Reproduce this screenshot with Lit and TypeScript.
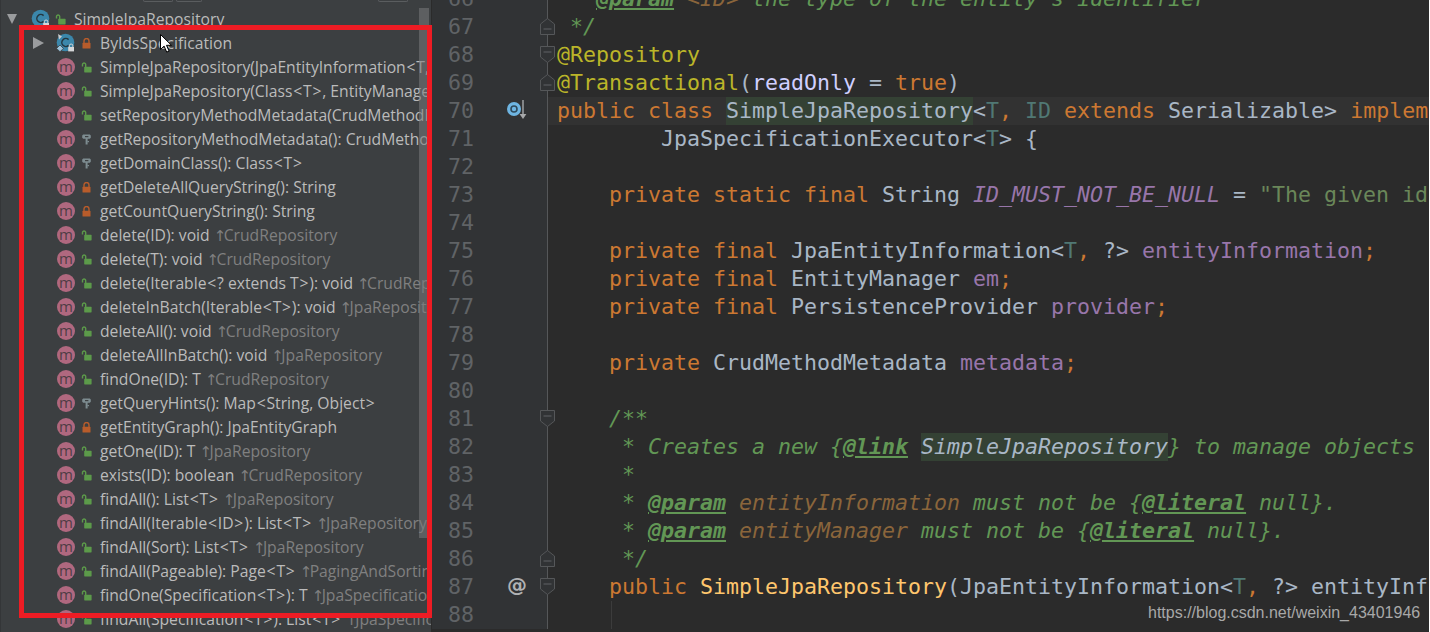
import { LitElement, html, css, svg } from "lit";
import { customElement } from "lit/decorators.js";

type Vis = "pub" | "pri" | "pro";
type Row = { n: string; s?: string; v: Vis };
type Tok = [string, string];
type Line = { no: number; toks: Tok[]; cur?: boolean; fold?: "up" | "down"; mark?: "impl" | "at"; guide?: boolean };

const rows: Row[] = [
  { n: "SimpleJpaRepository(JpaEntityInformation<T, ?>, EntityManager)", v: "pub" },
  { n: "SimpleJpaRepository(Class<T>, EntityManager)", v: "pub" },
  { n: "setRepositoryMethodMetadata(CrudMethodMetadata): void", v: "pub" },
  { n: "getRepositoryMethodMetadata(): CrudMethodMetadata", v: "pro" },
  { n: "getDomainClass(): Class<T>", v: "pro" },
  { n: "getDeleteAllQueryString(): String", v: "pri" },
  { n: "getCountQueryString(): String", v: "pri" },
  { n: "delete(ID): void ", s: "CrudRepository", v: "pub" },
  { n: "delete(T): void ", s: "CrudRepository", v: "pub" },
  { n: "delete(Iterable<? extends T>): void ", s: "CrudRepository", v: "pub" },
  { n: "deleteInBatch(Iterable<T>): void ", s: "JpaRepository", v: "pub" },
  { n: "deleteAll(): void ", s: "CrudRepository", v: "pub" },
  { n: "deleteAllInBatch(): void ", s: "JpaRepository", v: "pub" },
  { n: "findOne(ID): T ", s: "CrudRepository", v: "pub" },
  { n: "getQueryHints(): Map<String, Object>", v: "pro" },
  { n: "getEntityGraph(): JpaEntityGraph", v: "pri" },
  { n: "getOne(ID): T ", s: "JpaRepository", v: "pub" },
  { n: "exists(ID): boolean ", s: "CrudRepository", v: "pub" },
  { n: "findAll(): List<T> ", s: "JpaRepository", v: "pub" },
  { n: "findAll(Iterable<ID>): List<T> ", s: "JpaRepository", v: "pub" },
  { n: "findAll(Sort): List<T> ", s: "JpaRepository", v: "pub" },
  { n: "findAll(Pageable): Page<T> ", s: "PagingAndSortingRepository", v: "pub" },
  { n: "findOne(Specification<T>): T ", s: "JpaSpecificationExecutor", v: "pub" },
  { n: "findAll(Specification<T>): List<T> ", s: "JpaSpecificationExecutor", v: "pub" },
];

const lines: Line[] = [
  { no: 66, toks: [["doc", " * "], ["tag", "@param"], ["doc", " "], ["par", "<ID>"], ["doc", " the type of the entity's identifier"]] },
  { no: 67, toks: [["doc", " */"]], fold: "up" },
  { no: 68, toks: [["ann", "@Repository"]], fold: "down" },
  { no: 69, toks: [["ann", "@Transactional"], ["pl", "("], ["attr", "readOnly"], ["pl", " = "], ["kw", "true"], ["pl", ")"]], fold: "up" },
  { no: 70, cur: true, mark: "impl", toks: [["kw", "public class "], ["pl hl", "SimpleJpaRepository"], ["pl", "<"], ["tp", "T"], ["kw", ", "], ["tp", "ID"], ["kw", " extends "], ["pl", "Serializable> "], ["kw", "implements "], ["pl", "JpaRepository<T, ID>,"]] },
  { no: 71, toks: [["pl", "        JpaSpecificationExecutor<"], ["tp", "T"], ["pl", "> {"]] },
  { no: 72, toks: [] },
  { no: 73, toks: [["kw", "    private static final "], ["pl", "String "], ["cst", "ID_MUST_NOT_BE_NULL"], ["pl", " = "], ["str", "\"The given id must not be null!\""], ["kw", ";"]] },
  { no: 74, toks: [] },
  { no: 75, toks: [["kw", "    private final "], ["pl", "JpaEntityInformation<"], ["tp", "T"], ["kw", ", "], ["pl", "?> "], ["fld", "entityInformation"], ["kw", ";"]] },
  { no: 76, toks: [["kw", "    private final "], ["pl", "EntityManager "], ["fld", "em"], ["kw", ";"]] },
  { no: 77, toks: [["kw", "    private final "], ["pl", "PersistenceProvider "], ["fld", "provider"], ["kw", ";"]] },
  { no: 78, toks: [] },
  { no: 79, toks: [["kw", "    private "], ["pl", "CrudMethodMetadata "], ["fld", "metadata"], ["kw", ";"]] },
  { no: 80, toks: [] },
  { no: 81, toks: [["doc", "    /**"]], fold: "down" },
  { no: 82, toks: [["doc", "     * Creates a new {"], ["tag", "@link"], ["doc", " "], ["docref hl", "SimpleJpaRepository"], ["doc", "} to manage objects"]] },
  { no: 83, toks: [["doc", "     *"]] },
  { no: 84, toks: [["doc", "     * "], ["tag", "@param"], ["doc", " "], ["par", "entityInformation"], ["doc", " must not be {"], ["tag", "@literal"], ["doc", " null}."]] },
  { no: 85, toks: [["doc", "     * "], ["tag", "@param"], ["doc", " "], ["par", "entityManager"], ["doc", " must not be {"], ["tag", "@literal"], ["doc", " null}."]] },
  { no: 86, toks: [["doc", "     */"]], fold: "up" },
  { no: 87, mark: "at", fold: "down", toks: [["kw", "    public "], ["fn", "SimpleJpaRepository"], ["pl", "(JpaEntityInformation<"], ["tp", "T"], ["kw", ", "], ["pl", "?> entityInformation,"]] },
  { no: 88, guide: true, toks: [] },
];

const openLock = svg`<svg class="vis" viewBox="0 0 11 11" width="11" height="11"><path d="M1.5 4.5V2.6a1.6 1.6 0 0 1 3.2 0V5" fill="none" stroke="#5c9a4a" stroke-width="1.4"/><rect x="3.2" y="4.8" width="7.4" height="5.6" rx=".6" fill="#5c9a4a"/></svg>`;
const closedLock = svg`<svg class="vis" viewBox="0 0 11 11" width="11" height="11"><path d="M3 5V3a2.5 2.5 0 0 1 5 0v2" fill="none" stroke="#b85c2b" stroke-width="1.4"/><rect x="1.5" y="4.8" width="8" height="5.7" rx=".6" fill="#b85c2b"/></svg>`;
const keyIcon = svg`<svg class="vis" viewBox="0 0 11 11" width="11" height="11"><path d="M2.2 .6h6.6l1 1v2.2l-1 1H6.6v5.6H4.6V4.8H2.2l-1-1V1.6z" fill="#7d8c90"/><rect x="4" y="2" width="3.4" height="1.2" fill="#3c3f41"/><rect x="6.4" y="7" width="1.6" height="1.2" fill="#7d8c90"/></svg>`;

const visIcon = (v: Vis) => (v === "pub" ? openLock : v === "pri" ? closedLock : keyIcon);

const classIcon = (extra: boolean) => svg`<svg class="cls" viewBox="0 0 20 20" width="20" height="20">
  <circle cx="9.5" cy="9.5" r="8.8" fill="#3b87ab"/>
  <path d="M12.6 6.6a4 4 0 1 0 0 5.8" fill="none" stroke="#24363f" stroke-width="1.5"/>
  ${extra ? svg`<path d="M2 1l4 2.4-3 3z" fill="#c9ccce"/><path d="M4 12l3.4 3.4L4 18.8.6 15.4z" fill="#9fc5dc" stroke="#3c3f41" stroke-width=".8"/>` : ""}
  <path d="M13.3 14v-1.2a1.8 1.8 0 0 1 3.6 0V14" fill="none" stroke="#d5d7d8" stroke-width="1"/>
  <rect x="12.2" y="14" width="5.8" height="4.4" fill="#d5d7d8"/>
</svg>`;

const foldMark = (k: "up" | "down") =>
  k === "up"
    ? svg`<svg class="fold" viewBox="0 0 15 17" width="15" height="17"><path d="M7.5 .5l7 5.5v10.5H.5V6z" fill="#313335" stroke="#555759"/><path d="M3.5 11h8" stroke="#606366"/></svg>`
    : svg`<svg class="fold" viewBox="0 0 15 17" width="15" height="17"><path d="M.5 .5h14V11l-7 5.5-7-5.5z" fill="#313335" stroke="#555759"/><path d="M3.5 6h8" stroke="#606366"/></svg>`;

const implMark = svg`<svg class="impl" viewBox="0 0 22 22" width="22" height="22"><circle cx="8" cy="10" r="7" fill="#6eb5e2"/><circle cx="8" cy="10" r="3" fill="none" stroke="#2f4a5c" stroke-width="1.6"/><path d="M17 1v16" stroke="#a7a9ab" stroke-width="1.4"/><path d="M13.6 15h6.8L17 20z" fill="#a7a9ab"/></svg>`;

/* The reference's UI font sets angle brackets wider than Open Sans does. */
const label = (s: string) =>
  s.split(/([<>])/).map((p) => (p === "<" || p === ">" ? html`<span class="ang">${p}</span>` : p));

@customElement("app-root")
export class AppRoot extends LitElement {
  static styles = css`
    :host { display: block; width: 1430px; height: 632px; overflow: hidden; position: relative; background: #fff; }
    .ide { display: flex; height: 632px; width: 1429px; overflow: hidden; }
    .panel { position: relative; flex: 0 0 431px; height: 632px; overflow: hidden; background: #3c3f41; border-right: 1px solid #2b2b2b; box-shadow: inset 1px 0 0 #343638;
      font: 15.7px/24px "Open Sans", "Noto Sans", sans-serif; color: #bbbbbb; }
    .tools { display: flex; height: 7px; padding-left: 143px; gap: 3px; }
    .tool { height: 1px; border: 1px solid #5a5d5f; border-top: 0; border-radius: 0 0 3px 3px; width: 28px; }
    .tool.b { width: 24px; }
    .tool.c { width: 28px; margin-left: 173px; }
    .row { display: flex; align-items: center; height: 24px; white-space: pre; }
    .row.root { padding-left: 7px; }
    .row.child { padding-left: 33px; }
    .row.m { padding-left: 57px; }
    .arrow { width: 0; height: 0; flex: none; }
    .arrow.down { margin-right: 14px; border: 5.5px solid transparent; border-top: 10px solid #9a9c9e; border-bottom: 0; }
    .arrow.right { margin-right: 12px; border: 6px solid transparent; border-left: 11px solid #9a9c9e; border-right: 0; }
    .cls { flex: none; margin-right: 4px; }
    .child .cls { margin-right: 5px; }
    .vis { flex: none; }
    .lbl { margin-left: 8px; }
    .ang { padding: 0 0.8px; }
    .mi { flex: none; width: 18px; height: 18px; border-radius: 50%; background: #b0687f; color: #4f3d45; font: 15px/16px "Open Sans", sans-serif; text-align: center; margin-right: 6px; }
    .suffix { color: #808080; }
    .up { display: inline-block; width: 10px; text-align: center; font: 15px/24px "DejaVu Sans", sans-serif; }
    .sb { position: absolute; left: 419px; top: 8px; width: 10px; height: 530px; background: rgba(120,122,124,.55); }
    .frame { position: absolute; left: 19px; top: 25px; width: 413px; height: 593px; border: 5px solid #ed1c24; box-sizing: border-box; pointer-events: none; }
    .cursor { position: absolute; left: 160px; top: 34px; }
    .edit { flex: 1; min-width: 0; height: 632px; overflow: hidden; background: #2b2b2b; }
    .flow { margin-top: -15px; }
    .ln { display: flex; height: 28px; font: 21.6px/28px "DejaVu Sans Mono", monospace; white-space: pre; }
    .gut { flex: none; width: 115px; height: 28px; display: flex; background: #313335; border-right: 1px solid #555759; position: relative; }
    .num { width: 42px; text-align: right; color: #606366; }
    .mark { margin-left: 32px; width: 24px; height: 28px; display: flex; align-items: center; color: #b0b2b4; font: bold 20px/28px "DejaVu Sans", sans-serif; }
    .impl { margin-top: -3px; }
    .at { margin-left: 1px; margin-top: -4px; }
    .fold { position: absolute; left: 108px; top: 5px; }
    .code { flex: 1; min-width: 0; padding-left: 9px; overflow: hidden; position: relative; }
    .ln.cur .code { background: #323232; }
    .guide { position: absolute; left: 63px; top: 0; bottom: 0; width: 1px; background: #3c3c3c; }
    .hl { display: inline-block; height: 28px; background: #344134; }
    .kw { color: #cc7832; }
    .pl { color: #a9b7c6; }
    .ann { color: #bbb529; }
    .attr { color: #d0d0ff; }
    .tp { color: #507874; }
    .cst { color: #9876aa; font-style: italic; }
    .fld { color: #9876aa; }
    .str { color: #6a8759; }
    .fn { color: #ffc66d; }
    .doc { color: #629755; font-style: italic; }
    .docref { color: #a9b7c6; font-style: italic; }
    .par { color: #8a653b; font-style: italic; }
    .tag { color: #629755; font-style: italic; font-weight: bold; text-decoration: underline; }
    .wm { position: absolute; left: 1148px; top: 603px; font: 16px/20px "Liberation Sans", sans-serif; color: #a8a8a8; white-space: pre; }
  `;

  render() {
    return html`
      <div class="ide">
        <div class="panel">
          <div class="tools"><i class="tool"></i><i class="tool b"></i><i class="tool c"></i></div>
          <div class="row root"><i class="arrow down"></i>${classIcon(false)}${openLock}<span class="lbl">SimpleJpaRepository</span></div>
          <div class="row child"><i class="arrow right"></i>${classIcon(true)}${closedLock}<span class="lbl">ByIdsSpecification</span></div>
          ${rows.map(
            (r) => html`<div class="row m"><span class="mi">m</span>${visIcon(r.v)}<span class="lbl">${label(r.n)}${r.s ? html`<span class="suffix"><span class="up">↑</span>${r.s}</span>` : ""}</span></div>`
          )}
          <div class="sb"></div>
        </div>
        <div class="edit">
          <div class="flow">
            ${lines.map(
              (l) => html`<div class="ln ${l.cur ? "cur" : ""}">
                <div class="gut">
                  <span class="num">${l.no}</span>
                  <span class="mark">${l.mark === "impl" ? implMark : l.mark === "at" ? html`<span class="at">@</span>` : ""}</span>
                  ${l.fold ? foldMark(l.fold) : ""}
                </div>
                <div class="code">${l.guide ? html`<i class="guide"></i>` : ""}${l.toks.map((t) => html`<span class=${t[0]}>${t[1]}</span>`)}</div>
              </div>`
            )}
          </div>
        </div>
      </div>
      <div class="frame"></div>
      <svg class="cursor" viewBox="0 0 13 20" width="13" height="20"><path d="M.5 .5v15l3.6-3.4 2.6 6 2.4-1-2.6-5.8h5z" fill="#fff" stroke="#000"/></svg>
      <div class="wm">https://blog.csdn.net/weixin_43401946</div>
    `;
  }
}
